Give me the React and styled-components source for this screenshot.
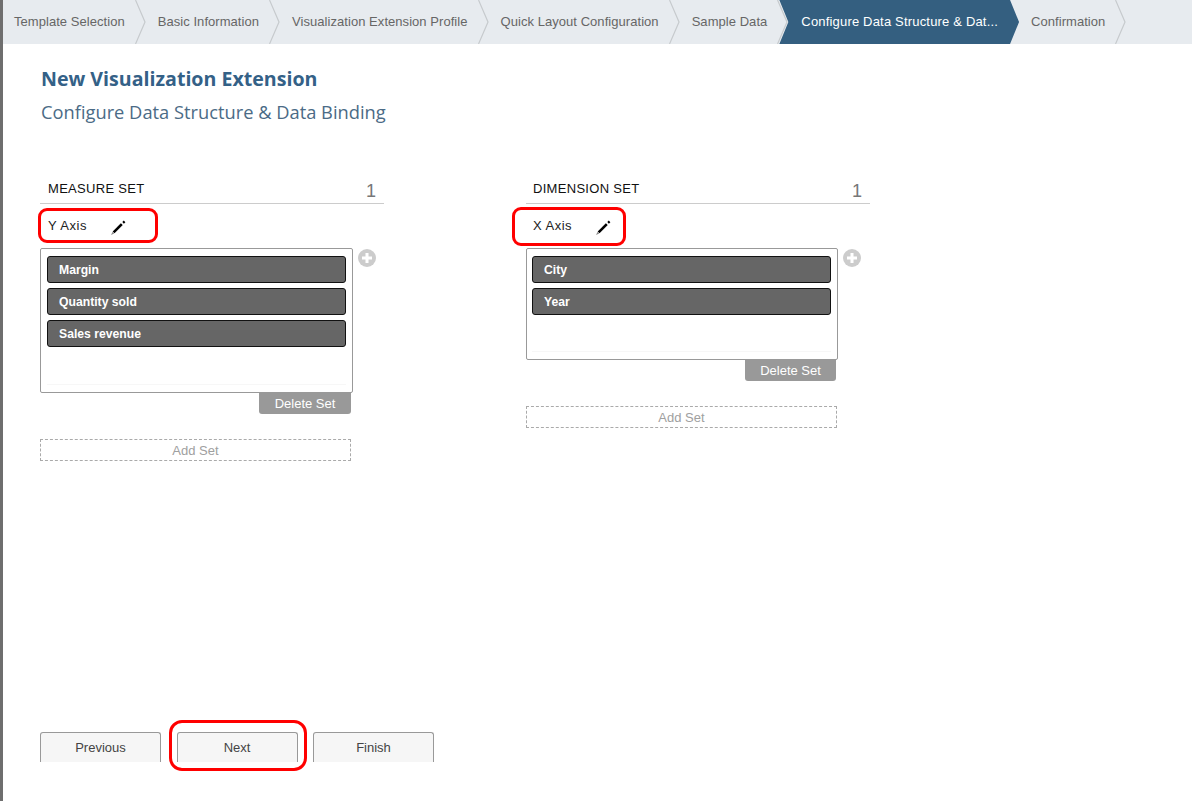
import React from 'react';
import styled, { createGlobalStyle } from 'styled-components';

const GlobalStyle = createGlobalStyle`
html, body {
    margin: 0;
    padding: 0;
    background: #fff;
    font-family: "Liberation Sans", Arial, sans-serif;
}
`;

const Page = styled.div`
position: relative;
height: 801px;
box-sizing: border-box;
display: flex;
flex-direction: column;
overflow: hidden;
border-left: 3px solid #6e6e6e;
`;

const EdgeMark = styled.span`
position: absolute;
left: -2px;
top: 31px;
width: 2px;
height: 10px;
background: #3d2a3c;
`;

const StepBar = styled.div`
height: 44px;
flex: none;
display: flex;
background: #e7ebef;
`;

const StepItem = styled.div`
position: relative;
height: 44px;
line-height: 43px;
padding: 0 21px 0 ${p => (p.$active ? 22 : 12)}px;
margin-left: ${p => (p.$active ? -9 : 0)}px;
font-size: 13px;
letter-spacing: ${p => (p.$active ? 0.18 : 0.05)}px;
white-space: nowrap;
color: ${p => (p.$active ? '#fff' : '#666')};
background: ${p => (p.$active ? '#345f80' : 'transparent')};
clip-path: ${p => (p.$active ? 'polygon(0 0, calc(100% - 9px) 0, 100% 50%, calc(100% - 9px) 100%, 0 100%, 9px 50%)' : 'none')};
&:first-child {
    padding-left: 11px;
}
svg {
    position: absolute;
    top: 0;
    right: 0;
}
`;

const Main = styled.div`
flex: 1;
display: flex;
flex-direction: column;
padding: 23px 0 39px 37px;
`;

const Title = styled.h1`
margin: 0 0 0 1px;
font: 700 19.6px/24px "Open Sans", sans-serif;
color: #346187;
`;

const SubTitle = styled.h2`
margin: 9px 0 0 1px;
font: 400 18.3px/24px "Open Sans", sans-serif;
color: #4b6b86;
`;

const Columns = styled.div`
display: flex;
gap: 142px;
margin-top: 50px;
`;

const SetColumn = styled.div`
position: relative;
width: 344px;
`;

const SetHeader = styled.div`
height: 30px;
box-sizing: border-box;
display: flex;
justify-content: space-between;
align-items: flex-start;
padding: 8px 8px 0 ${p => p.$inset}px;
border-bottom: 1px solid #ccc;
color: #111;
font-size: 13px;
line-height: 14px;
letter-spacing: 0.3px;
`;

const SetCount = styled.span`
margin-top: -1px;
font-size: 18px;
line-height: 20px;
letter-spacing: 0;
color: #777;
`;

const AxisRow = styled.div`
height: 44px;
display: flex;
align-items: flex-start;
padding: 14px 0 0 ${p => p.$inset}px;
box-sizing: border-box;
font-size: 13px;
line-height: 15px;
letter-spacing: 0.5px;
color: #222;
svg {
    margin: 2px 0 0 23px;
}
`;

const BoxRow = styled.div`
display: flex;
align-items: flex-start;
`;

const FeedBox = styled.div`
width: ${p => p.$width}px;
height: ${p => p.$height}px;
box-sizing: border-box;
padding: 7px 6px 7px ${p => p.$inset}px;
background: #fff;
border: 1px solid #999;
border-radius: 2px;
`;

const FeedList = styled.div`
height: 100%;
box-sizing: border-box;
display: flex;
flex-direction: column;
gap: 5px;
border-bottom: 1px solid #f7f7f7;
`;

const FeedItem = styled.div`
width: 299px;
height: 27px;
box-sizing: border-box;
line-height: 26px;
padding-left: 11px;
font-size: 12.2px;
font-weight: 700;
color: #fff;
background: #666;
border: 1px solid #111;
border-radius: 3px;
`;

const AddCircle = styled.span`
width: 18px;
height: 18px;
margin: 1px 0 0 5px;
svg {
    display: block;
}
`;

const DeleteRow = styled.div`
width: ${p => p.$width}px;
display: flex;
justify-content: flex-end;
`;

const DeleteButton = styled.div`
width: ${p => p.$width}px;
height: 21px;
line-height: 21px;
text-align: center;
font-size: 13px;
color: #fff;
background: #999;
border-radius: 0 0 3px 3px;
`;

const AddSet = styled.div`
width: 311px;
height: 22px;
box-sizing: border-box;
margin-top: 25px;
line-height: 21px;
text-align: center;
font-size: 13px;
color: #a0a0a0;
border: 1px dashed #aaa;
`;

const Footer = styled.div`
position: relative;
display: flex;
gap: 15.5px;
margin-top: auto;
`;

const FooterButton = styled.div`
width: 121px;
height: 30px;
box-sizing: border-box;
line-height: 29px;
text-align: center;
font-size: 13px;
color: #444;
background: #f6f6f6;
border: 1px solid #999;
border-bottom: 0;
border-radius: 3px 3px 0 0;
`;

const Callout = styled.div`
position: absolute;
left: ${p => p.$left}px;
top: ${p => p.$top}px;
width: ${p => p.$width}px;
height: ${p => p.$height}px;
box-sizing: border-box;
border: 3.5px solid #f00;
border-radius: ${p => p.$radius || 9}px;
pointer-events: none;
`;

const steps = [
    'Template Selection',
    'Basic Information',
    'Visualization Extension Profile',
    'Quick Layout Configuration',
    'Sample Data',
    'Configure Data Structure & Dat...',
    'Confirmation',
];

const Chevron = () => (
    <svg width="11" height="44" viewBox="0 0 11 44">
        <path d="M0.5 0 L10 22 L0.5 44" fill="none" stroke="#c6cacd" strokeWidth="1.2" />
    </svg>
);

const Pencil = () => (
    <svg width="16" height="16" viewBox="0 0 16 16">
        <path d="M3.6 12.4 L11.8 4.2" stroke="#000" strokeWidth="2.6" />
        <path d="M13.1 2.9 L14.6 1.4" stroke="#000" strokeWidth="2.2" />
        <path d="M2.6 11.8 L4.2 13.4 L1 15 Z" fill="#8a8a8a" />
    </svg>
);

const Plus = () => (
    <svg width="18" height="18" viewBox="0 0 18 18">
        <circle cx="9" cy="9" r="9" fill="#ccc" />
        <path d="M9 4 V14 M4 9 H14" stroke="#fff" strokeWidth="3" />
    </svg>
);

const SetBlock = ({ title, axis, items, height, inset, boxWidth, boxInset, deleteRow, deleteWidth, callout }) => (
    <SetColumn>
        <SetHeader $inset={inset}>
            <span>{title}</span>
            <SetCount>1</SetCount>
        </SetHeader>
        <AxisRow $inset={inset}>
            {axis}
            <Pencil />
        </AxisRow>
        <BoxRow>
            <FeedBox $height={height} $width={boxWidth} $inset={boxInset}>
                <FeedList>
                    {items.map(item => <FeedItem key={item}>{item}</FeedItem>)}
                </FeedList>
            </FeedBox>
            <AddCircle><Plus /></AddCircle>
        </BoxRow>
        <DeleteRow $width={deleteRow}>
            <DeleteButton $width={deleteWidth}>Delete Set</DeleteButton>
        </DeleteRow>
        <AddSet>Add Set</AddSet>
        <Callout {...callout} />
    </SetColumn>
);

export default function App() {
    return (
        <Page>
            <GlobalStyle />
            <EdgeMark />
            <StepBar>
                {steps.map((step, i) => (
                    <StepItem key={step} $active={i === 5}>
                        {step}
                        {i !== 5 && <Chevron />}
                    </StepItem>
                ))}
            </StepBar>
            <Main>
                <Title>New Visualization Extension</Title>
                <SubTitle>Configure Data Structure &amp; Data Binding</SubTitle>
                <Columns>
                    <SetBlock
                        title="MEASURE SET"
                        axis="Y Axis"
                        items={['Margin', 'Quantity sold', 'Sales revenue']}
                        height={145}
                        inset={8}
                        boxWidth={313}
                        boxInset={6}
                        deleteRow={311}
                        deleteWidth={92}
                        callout={{ $left: -2, $top: 34, $width: 120, $height: 35 }}
                    />
                    <SetBlock
                        title="DIMENSION SET"
                        axis="X Axis"
                        items={['City', 'Year']}
                        height={112}
                        inset={7}
                        boxWidth={312}
                        boxInset={5}
                        deleteRow={310}
                        deleteWidth={91}
                        callout={{ $left: -14, $top: 33, $width: 114, $height: 39 }}
                    />
                </Columns>
                <Footer>
                    <FooterButton>Previous</FooterButton>
                    <FooterButton>Next</FooterButton>
                    <FooterButton>Finish</FooterButton>
                    <Callout $left={129} $top={-12} $width={138} $height={51} $radius={13} />
                </Footer>
            </Main>
        </Page>
    );
}
